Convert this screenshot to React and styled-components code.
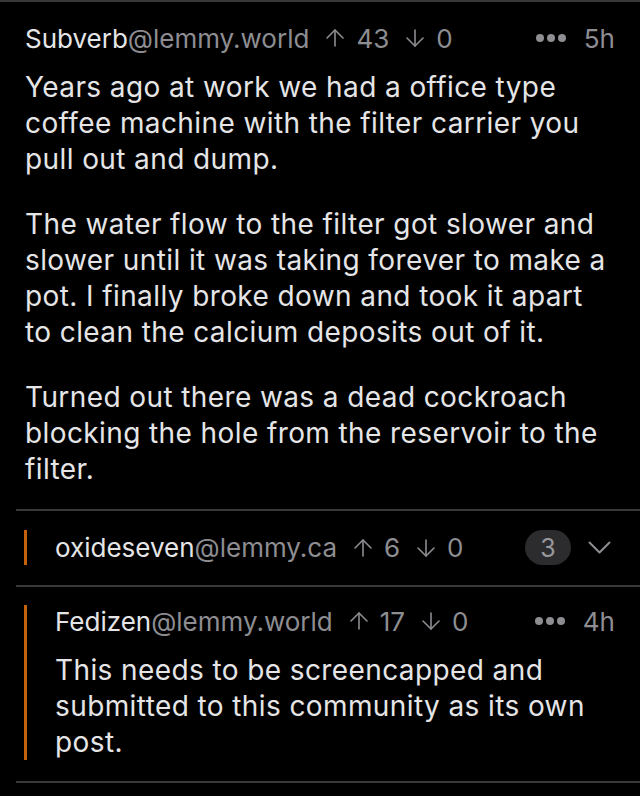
import React from "react";
import styled, { createGlobalStyle } from "styled-components";

const GlobalStyle = createGlobalStyle`
  html, body {
    margin: 0;
    padding: 0;
    background: #000000;
  }
  body {
    font-family: Inter, "Noto Sans", "Liberation Sans", sans-serif;
    -webkit-font-smoothing: antialiased;
  }
`;

const comments = [
  {
    id: 1,
    depth: 0,
    user: "Subverb",
    instance: "@lemmy.world",
    up: 43,
    down: 0,
    age: "5h",
    body: [
      "Years ago at work we had a office type coffee machine with the filter carrier you pull out and dump.",
      "The water flow to the filter got slower and slower until it was taking forever to make a pot. I finally broke down and took it apart to clean the calcium deposits out of it.",
      "Turned out there was a dead cockroach blocking the hole from the reservoir to the filter.",
    ],
  },
  {
    id: 2,
    depth: 1,
    collapsed: true,
    user: "oxideseven",
    instance: "@lemmy.ca",
    up: 6,
    down: 0,
    replies: 3,
  },
  {
    id: 3,
    depth: 1,
    user: "Fedizen",
    instance: "@lemmy.world",
    up: 17,
    down: 0,
    age: "4h",
    body: [
      "This needs to be screencapped and submitted to this community as its own post.",
    ],
  },
];

const ArrowIcon = ({ down }) => (
  <svg width="18" height="18" viewBox="0 0 18 18" fill="none">
    <g
      stroke="#8d8d92"
      strokeWidth="1.6"
      strokeLinecap="round"
      strokeLinejoin="round"
      transform={down ? "rotate(180 9 9)" : undefined}
    >
      <path d="M9 17V1" />
      <path d="M1 9L9 1L17 9" />
    </g>
  </svg>
);

const Chevron = () => (
  <svg width="23" height="13" viewBox="0 0 23 13" fill="none">
    <path
      d="M1.5 1.5L11.5 11.5L21.5 1.5"
      stroke="#8d8d92"
      strokeWidth="2"
      strokeLinecap="round"
      strokeLinejoin="round"
    />
  </svg>
);

const Comment = ({ c }) => {
  const header = (
    <Header>
      <Author>
        {c.user}
        <Instance>{c.instance}</Instance>
      </Author>
      <Vote>
        <ArrowIcon />
        <span>{c.up}</span>
      </Vote>
      <Vote>
        <ArrowIcon down />
        <span>{c.down}</span>
      </Vote>
      <Spacer />
      {c.collapsed ? (
        <>
          <Badge>{c.replies}</Badge>
          <Chevron />
        </>
      ) : (
        <>
          <Dots>
            <i />
            <i />
            <i />
          </Dots>
          <Age>{c.age}</Age>
        </>
      )}
    </Header>
  );

  return (
    <Block $depth={c.depth} $collapsed={c.collapsed}>
      <Inner>
        {c.depth > 0 && <Bar />}
        <Content $collapsed={c.collapsed}>
          {header}
          {!c.collapsed && (
            <Body>
              {c.body.map((p, i) => (
                <p key={i}>{p}</p>
              ))}
            </Body>
          )}
        </Content>
      </Inner>
    </Block>
  );
};

const App = () => {
  return (
    <>
      <GlobalStyle />
      <Page>
        {comments.map((c) => (
          <Comment key={c.id} c={c} />
        ))}
        <EndLine />
      </Page>
    </>
  );
};

// styles
const Page = styled.div`
  min-height: 796px;
  background: #000000;
  color: #e5e5e7;
`;

const Block = styled.div`
  border-top: 2px solid #38383a;
  margin-left: ${(p) => (p.$depth > 0 ? 16 : 0)}px;
  padding: ${(p) =>
    p.$collapsed
      ? "19px 29px 20px 8px"
      : p.$depth > 0
      ? "18px 25px 21px 8px"
      : "20px 25px 22px 25px"};
`;

const Inner = styled.div`
  display: flex;
  gap: 28px;
`;

const Bar = styled.div`
  width: 3px;
  flex-shrink: 0;
  background: #c4620c;
`;

const Content = styled.div`
  flex: 1;
  min-width: 0;
  display: flex;
  flex-direction: column;
  gap: 15px;
  min-height: ${(p) => (p.$collapsed ? "35px" : "auto")};
  justify-content: center;
`;

const Header = styled.div`
  display: flex;
  align-items: center;
  height: 32px;
  font-size: 26px;
  color: #8d8d92;
  white-space: nowrap;
`;

const Author = styled.span`
  color: #e5e5e7;
`;

const Instance = styled.span`
  color: #8d8d92;
`;

const Vote = styled.span`
  display: flex;
  align-items: center;
  gap: 12px;
  margin-left: 17px;
`;

const Spacer = styled.div`
  flex: 1;
`;

const Dots = styled.span`
  display: flex;
  gap: 3px;
  margin-right: 18px;

  i {
    width: 8px;
    height: 8px;
    border-radius: 50%;
    background: #8d8d92;
  }
`;

const Age = styled.span`
  color: #8d8d92;
`;

const Badge = styled.span`
  display: flex;
  align-items: center;
  justify-content: center;
  width: 46px;
  height: 35px;
  border-radius: 18px;
  background: #2c2c2e;
  color: #98989d;
  font-size: 25px;
  margin-right: 17px;
`;

const Body = styled.div`
  font-size: 28px;
  line-height: 36px;
  letter-spacing: 0.4px;
  color: #e5e5e7;

  p {
    margin: 0 0 29px;
  }
  p:last-child {
    margin-bottom: 0;
  }
`;

const EndLine = styled.div`
  margin-left: 16px;
  border-top: 2px solid #38383a;
`;

export default App;
